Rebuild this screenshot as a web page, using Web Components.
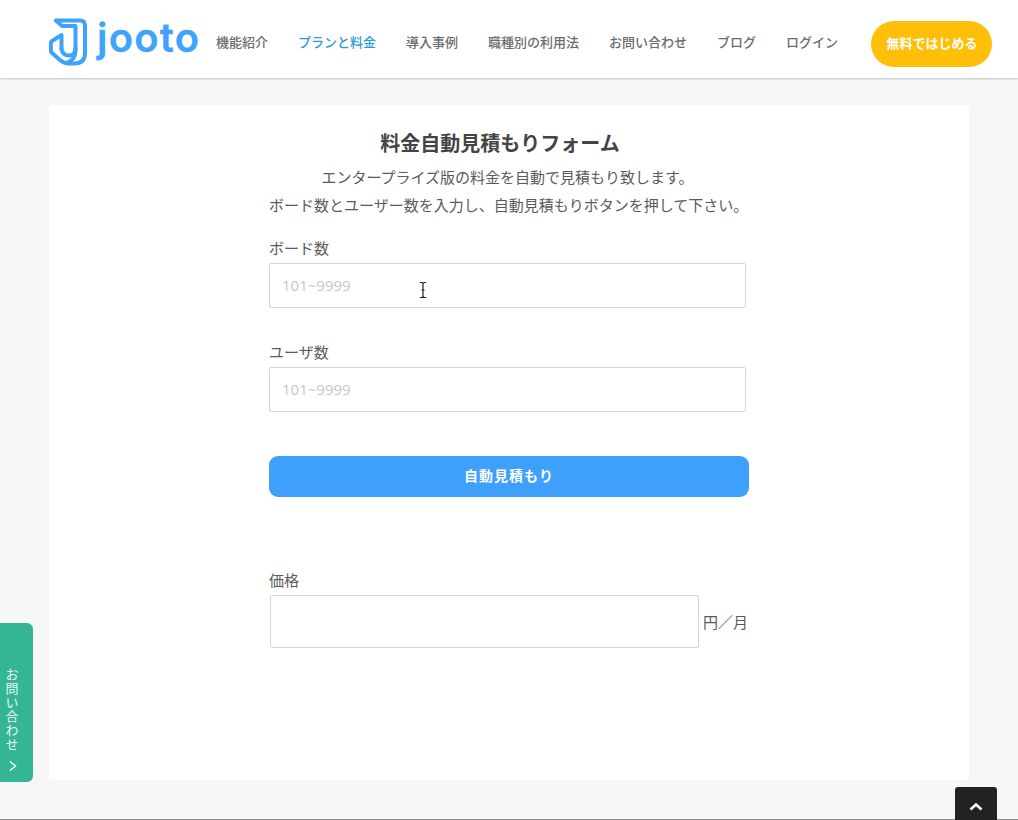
<!DOCTYPE html>
<html lang="ja"><head><meta charset="utf-8"><title>Jooto</title>
<style>
html,body{margin:0;padding:0;height:820px;overflow:hidden;background:#f7f7f7}
body{font-family:"Noto Sans CJK JP","Noto Sans",sans-serif;color:#555}
</style></head><body>
<app-page></app-page>
<script>
function def(name,css,html){
  customElements.define(name,class extends HTMLElement{
    constructor(){super();const s=this.attachShadow({mode:'open'});
      s.innerHTML='<style>'+css+'</style>'+(typeof html==='function'?html(this):html);}
  });
}
def('jooto-logo',`:host{display:flex;align-items:flex-start;width:167px;height:78px;position:relative}
svg{display:block;flex:none;margin-top:17px}
span{font:600 40px/1 "Inter",sans-serif;color:#3fa2fb;margin:18px 0 0 8px;letter-spacing:1.200px;-webkit-text-stroke:.3px #3fa2fb}`,
`<svg width="40" height="50" viewBox="0 0 40 50" fill="none" stroke="#3fa2fb" stroke-width="4" stroke-linejoin="round" stroke-linecap="round">
<path d="M7 3.500H31Q36 3.500 36 8.500V36Q36 46.500 25 46.500H20Q15 46.500 11 43L3 36Q1.800 34.800 1.800 33V26.500Q1.800 25 3 24L12.500 18V32"/>
<path d="M7 3.500L13 9H26.500V33Q26.500 43 18.500 45.500"/><path d="M12.500 32Q13.500 38.500 20 38.500Q26.500 38.500 26.500 31"/>
</svg><span>jooto</span>`);
def('nav-link',`:host{display:block;font:500 13px/1 "Noto Sans CJK JP",sans-serif;color:#6c6c6c;white-space:nowrap}
:host([active]){color:#2a9ad8}`,`<slot></slot>`);
def('cta-button',`:host{display:flex;align-items:center;justify-content:center;box-sizing:border-box;width:121px;height:46px;padding:0 0 3px 1px;border-radius:23px;background:#ffbe08;color:#fff;font:700 13px/1 "Noto Sans CJK JP",sans-serif;flex:none}`,`<slot></slot>`);
def('site-header',`:host{display:flex;align-items:center;height:78px;background:#fff;box-shadow:0 1px 2px rgba(0,0,0,.22);padding-left:49px;position:relative}
nav{display:flex;gap:30px;align-items:center;margin-top:5px}
cta-button{margin:10px 0 0 33px}`,
`<jooto-logo></jooto-logo><nav>
<nav-link>機能紹介</nav-link><nav-link active>プランと料金</nav-link><nav-link>導入事例</nav-link><nav-link>職種別の利用法</nav-link><nav-link>お問い合わせ</nav-link><nav-link>ブログ</nav-link><nav-link>ログイン</nav-link>
</nav><cta-button>無料ではじめる</cta-button>`);
def('form-field',`:host{display:block;font:400 15px/1 "Noto Sans CJK JP",sans-serif;color:#5a5a5a}
label{display:block;height:22px;line-height:22px;margin-bottom:4px}
.b{width:477px;height:45px;box-sizing:border-box;border:1px solid #d5d5d5;border-radius:2px;background:#fff;display:flex;align-items:center;padding:0 0 2px 12px;color:#c6c6c6;font:400 15px "Open Sans",sans-serif}`,
h=>`<label>${h.getAttribute('label')}</label><div class="b">${h.getAttribute('placeholder')}</div>`);
def('quote-button',`:host{display:flex;align-items:center;justify-content:center;box-sizing:border-box;width:480px;height:41px;padding-bottom:3px;border-radius:9px;background:#3fa0fc;color:#fff;font:700 14px/1 "Noto Sans CJK JP",sans-serif;letter-spacing:1px}`,`<slot></slot>`);
def('price-field',`:host{display:block;font:400 15px/1 "Noto Sans CJK JP",sans-serif;color:#5a5a5a}
label{display:block;height:22px;line-height:22px;margin-bottom:4px}
.r{display:flex;align-items:center;gap:4px;padding-left:1px}
.b{width:429px;height:53px;box-sizing:border-box;border:1px solid #d5d5d5;border-radius:2px;background:#fff}`,
`<label>価格</label><div class="r"><div class="b"></div><span>円／月</span></div>`);
def('estimate-form',`:host{display:block;width:480px;margin-left:220px;padding-top:26px;position:relative}
h1{margin:0 0 8px;font:700 20px/24px "Noto Sans CJK JP",sans-serif;color:#444;text-align:center;padding-right:18px}
p{margin:0;font:400 15px/28px "Noto Sans CJK JP",sans-serif;color:#5a5a5a;white-space:nowrap}
p.c{text-align:center;padding-right:3px}
.f1{margin-top:18px}.f2{margin-top:33px}
quote-button{margin-top:44px}
price-field{margin-top:72px}
svg{position:absolute;left:150px;top:176px}`,
`<h1>料金自動見積もりフォーム</h1>
<p class="c">エンタープライズ版の料金を自動で見積もり致します。</p>
<p>ボード数とユーザー数を入力し、自動見積もりボタンを押して下さい。</p>
<form-field class="f1" label="ボード数" placeholder="101~9999"></form-field>
<form-field class="f2" label="ユーザ数" placeholder="101~9999"></form-field>
<quote-button>自動見積もり</quote-button>
<price-field></price-field>
<svg width="8" height="18" viewBox="0 0 8 18" fill="none" stroke="#222" stroke-width="1.2"><path d="M.8 1.500H2.500Q4 1.500 4 3V15Q4 16.500 2.500 16.500H.8M7.200 1.500H5.500Q4 1.500 4 3M4 15Q4 16.500 5.500 16.500H7.200M2.500 9H5.500"/></svg>`);
def('side-tab',`:host{position:fixed;left:0;top:623px;width:33px;height:159px;box-sizing:border-box;background:#34b594;border-radius:0 6px 6px 0;color:#e4f6f0;display:flex;flex-direction:column;align-items:center;padding-top:45px}
span{writing-mode:vertical-rl;font:400 13px/1 "Noto Sans CJK JP",sans-serif;letter-spacing:.85px;margin-left:-9px}
svg{margin:9px 0 0 -8px;display:block}
.w{display:flex;flex-direction:column;align-items:center}`,
`<div class="w"><span>お問い合わせ</span><svg width="8" height="12" viewBox="0 0 8 12" fill="none" stroke="#fff" stroke-width="1.500"><path d="M1 1.500L6.500 6L1 10.500"/></svg></div>`);
def('top-button',`:host{position:fixed;left:955px;top:787px;width:42px;height:33px;background:#222;border-radius:3px 3px 0 0;display:flex;justify-content:center;padding-top:15px;box-sizing:border-box}`,
`<svg width="14" height="9" viewBox="0 0 14 9" fill="none" stroke="#fff" stroke-width="2.600"><path d="M1.500 7.500L7 2.500L12.500 7.500"/></svg>`);
def('app-page',`:host{display:block;height:820px;position:relative}
main{display:block;width:920px;height:675px;margin:27px auto 0;background:#fff}
footer{margin-top:39px;height:1px;background:#8a8a8a}`,
`<site-header></site-header><main><estimate-form></estimate-form></main><footer></footer><side-tab></side-tab><top-button></top-button>`);
</script></body></html>
